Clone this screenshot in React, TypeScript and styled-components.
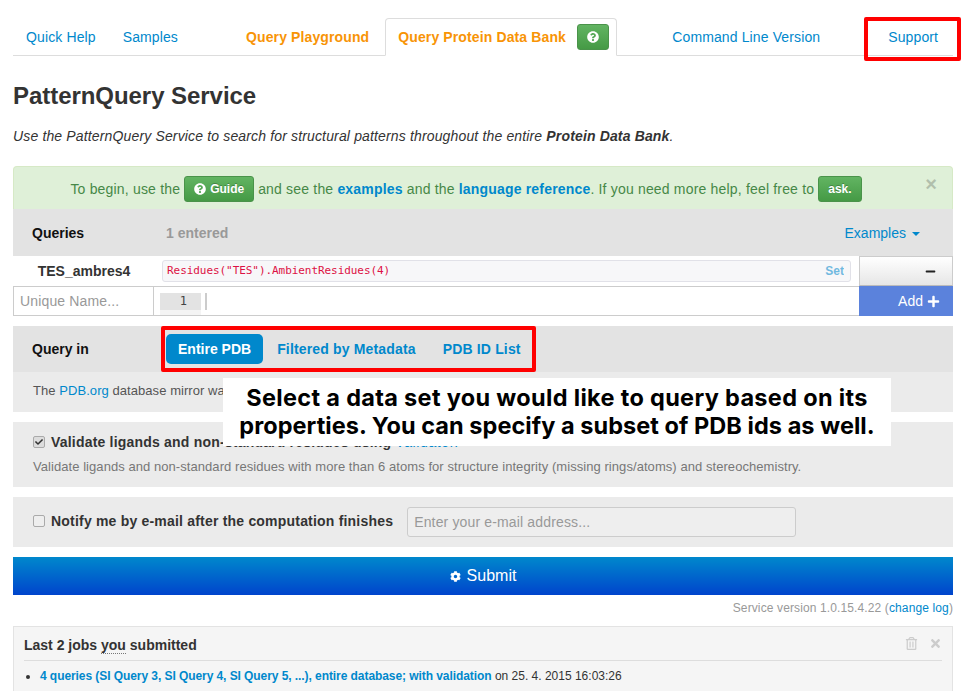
import React from "react";
import styled, { createGlobalStyle } from "styled-components";
import { FaQuestionCircle, FaCog, FaPlus, FaMinus, FaTimes, FaRegTrashAlt, FaCheck } from "react-icons/fa";

const Global = createGlobalStyle`
  html, body { margin: 0; padding: 0; background: #fff; }
  body { font-family: "Liberation Sans", Arial, sans-serif; font-size: 14px; line-height: 20px; color: #333; }
`;

const Page = styled.div`
  position: relative;
  width: 968px;
  height: 691px;
  overflow: hidden;
  box-sizing: border-box;
  padding: 18px 15px 0 13px;
`;

const Tabs = styled.nav`
  display: flex;
  align-items: flex-end;
  height: 38px;
  border-bottom: 1px solid #ddd;
  box-sizing: border-box;
  letter-spacing: 0.12px;
`;

const Tab = styled.a<{ $gap?: number; $orange?: boolean }>`
  margin-left: ${(p) => p.$gap ?? 0}px;
  padding: 0 13px;
  height: 37px;
  line-height: 38px;
  color: ${(p) => (p.$orange ? "#f89406" : "#0088cc")};
  font-weight: ${(p) => (p.$orange ? "bold" : "normal")};
  white-space: nowrap;
`;

const ActiveTab = styled.div`
  margin-left: 3px;
  width: 232px;
  height: 38px;
  margin-bottom: -1px;
  box-sizing: border-box;
  border: 1px solid #ddd;
  border-bottom-color: #fff;
  border-radius: 4px 4px 0 0;
  background: #fff;
  padding: 0 7px 0 12px;
  display: flex;
  align-items: center;
  justify-content: space-between;
  color: #f89406;
  font-weight: bold;
`;

const GreenButton = styled.span`
  display: inline-flex;
  align-items: center;
  justify-content: center;
  gap: 4px;
  box-sizing: border-box;
  color: #fff;
  font-weight: bold;
  font-size: 12px;
  line-height: 14px;
  letter-spacing: 0;
  text-shadow: 0 -1px 0 rgba(0, 0, 0, 0.25);
  background-image: linear-gradient(to bottom, #62b462, #459a45);
  border: 1px solid #4a934a;
  border-radius: 3px;
  height: 26px;
  padding: 0 9px;
  vertical-align: middle;
`;

const Title = styled.h2`
  margin: 25px 0 0;
  font-size: 24px;
  line-height: 30px;
  font-weight: bold;
  letter-spacing: -0.05px;
  color: #333;
`;

const Lead = styled.p`
  margin: 15px 0 0;
  font-style: italic;
  font-size: 14px;
  line-height: 20px;
  letter-spacing: 0.15px;
  color: #333;
`;

const Alert = styled.div`
  position: relative;
  margin-top: 20px;
  height: 43px;
  box-sizing: border-box;
  background: #dff0d8;
  border: 1px solid #d6e9c6;
  border-bottom: 0;
  border-radius: 4px 4px 0 0;
  color: #468847;
  display: flex;
  align-items: center;
  justify-content: center;
  gap: 4px;
  padding: 1px 34px 0 0;
  white-space: pre;
  line-height: 20px;
  letter-spacing: 0.18px;
`;

const AlertLink = styled.a`
  color: #0088cc;
  font-weight: bold;
`;

const CloseX = styled.span`
  position: absolute;
  top: 9px;
  right: 15px;
  font-size: 20px;
  line-height: 16px;
  font-weight: bold;
  color: #000;
  opacity: 0.2;
`;

const SectionHead = styled.div<{ $h: number; $gapTop?: number }>`
  display: flex;
  align-items: center;
  height: ${(p) => p.$h}px;
  margin-top: ${(p) => p.$gapTop ?? 0}px;
  background: #e3e3e3;
  padding: 0 33px 0 19px;
`;

const HeadLabel = styled.div`
  width: 134px;
  font-weight: bold;
  color: #111;
`;

const Entered = styled.div`
  flex: 1;
  font-weight: bold;
  color: #999;
`;

const Examples = styled.a`
  color: #0088cc;
  display: flex;
  align-items: center;
  gap: 6px;
`;

const Caret = styled.span`
  width: 0;
  height: 0;
  margin-top: 2px;
  border-left: 4px solid transparent;
  border-right: 4px solid transparent;
  border-top: 4px solid #0088cc;
`;

const QueryRow = styled.div`
  display: grid;
  grid-template-columns: 141px 1fr 94px;
  height: 30px;
`;

const QueryName = styled.div`
  padding-left: 1px;
  text-align: center;
  font-weight: bold;
  line-height: 30px;
  color: #333;
`;

const CodeWrap = styled.div`
  padding: 4px 8px 4px 8px;
`;

const CodeBox = styled.div`
  height: 22px;
  box-sizing: border-box;
  background: #f7f7f9;
  border: 1px solid #e1e1e8;
  border-radius: 3px;
  padding: 0 6px 0 4px;
  display: flex;
  align-items: center;
  justify-content: space-between;
`;

const CodeText = styled.code`
  font-family: "DejaVu Sans Mono", "Liberation Mono", monospace;
  font-size: 11px;
  letter-spacing: -0.06px;
  color: #dd1144;
`;

const SetLink = styled.a`
  font-size: 12px;
  font-weight: bold;
  color: #0088cc;
  opacity: 0.55;
`;

const MinusButton = styled.button`
  border: 1px solid #ccc;
  border-bottom-color: #bbb;
  padding: 0 16px 0 0;
  background: linear-gradient(#ffffff, #e6e6e6);
  display: flex;
  align-items: center;
  justify-content: flex-end;
  color: #222;
  font-size: 11px;
`;

const InputRow = styled.div`
  display: grid;
  grid-template-columns: 141px 1fr 94px;
  height: 30px;
  box-sizing: border-box;
`;

const NameInput = styled.div`
  box-sizing: border-box;
  border: 1px solid #ccc;
  padding: 0 6px;
  line-height: 28px;
  letter-spacing: 0.15px;
  color: #999;
`;

const EditorCell = styled.div`
  box-sizing: border-box;
  border-top: 1px solid #ccc;
  border-bottom: 1px solid #ccc;
  display: flex;
  padding: 6px 0 0 6px;
  gap: 4px;
`;

const Gutter = styled.div`
  width: 41px;
  height: 22px;
  background: linear-gradient(#e3e3e3 17px, #f4f4f4 17px);
  text-align: right;
  padding-right: 14px;
  box-sizing: border-box;
  font-family: "DejaVu Sans Mono", monospace;
  font-size: 12px;
  line-height: 17px;
  color: #444;
`;

const Cursor = styled.div`
  width: 2px;
  height: 17px;
  background: #ccc;
`;

const AddButton = styled.button`
  border: 0;
  padding: 0 13px 0 0;
  background: #5b82dc;
  color: #fff;
  font-family: inherit;
  font-size: 14px;
  display: flex;
  align-items: center;
  justify-content: flex-end;
  gap: 4px;
`;

const Pills = styled.div`
  display: flex;
  align-items: center;
  gap: 1px;
`;

const Pill = styled.a<{ $active?: boolean }>`
  height: 30px;
  line-height: 30px;
  padding: 0 ${(p) => (p.$active ? 12 : 13)}px;
  font-weight: bold;
  letter-spacing: ${(p) => (p.$active ? 0 : 0.16)}px;
  border-radius: 5px;
  color: ${(p) => (p.$active ? "#fff" : "#0088cc")};
  background: ${(p) => (p.$active ? "#0088cc" : "transparent")};
  white-space: nowrap;
`;

const InfoBar = styled.div`
  height: 40px;
  box-sizing: border-box;
  background: #ebebeb;
  padding: 9px 20px;
  font-size: 13px;
  line-height: 20px;
  letter-spacing: 0.06px;
  color: #555;
  white-space: nowrap;
`;

const BlueLink = styled.a`
  color: #0088cc;
`;

const OptionCard = styled.div`
  margin-top: 10px;
  background: #ebebeb;
  height: 65px;
  box-sizing: border-box;
  padding: 10px 20px;
`;

const NotifyCard = styled(OptionCard)`
  height: 50px;
  padding: 10px 20px;
  display: flex;
  align-items: center;
`;

const CheckLine = styled.div`
  display: flex;
  align-items: center;
  gap: 6px;
  font-weight: bold;
  letter-spacing: 0.2px;
  color: #333;
  white-space: nowrap;
`;

const NotifyLine = styled(CheckLine)`
  margin-bottom: 2px;
`;

const CheckLink = styled(BlueLink)`
  font-weight: normal;
  letter-spacing: 0.6px;
`;

const CheckBox = styled.span<{ $on?: boolean }>`
  width: 12px;
  height: 12px;
  box-sizing: border-box;
  border: 1px solid #aaa;
  border-radius: 2px;
  background: ${(p) => (p.$on ? "#ddd" : "#eee")};
  display: inline-flex;
  align-items: center;
  justify-content: center;
  font-size: 8px;
  color: #333;
`;

const Help = styled.div`
  margin-top: 5px;
  font-size: 13px;
  line-height: 20px;
  letter-spacing: 0.06px;
  color: #777;
  white-space: nowrap;
`;

const EmailInput = styled.div`
  margin-left: 14px;
  width: 389px;
  height: 30px;
  box-sizing: border-box;
  border: 1px solid #ccc;
  border-radius: 3px;
  background: #eee;
  padding: 0 6px;
  line-height: 29px;
  letter-spacing: 0.15px;
  color: #999;
`;

const SubmitButton = styled.button`
  display: flex;
  width: 100%;
  align-items: center;
  justify-content: center;
  gap: 6px;
  margin-top: 10px;
  height: 38px;
  border: 0;
  background: linear-gradient(#0088cc, #0044cc);
  color: #fff;
  font-family: inherit;
  font-size: 16px;
`;

const Version = styled.div`
  margin-top: 3px;
  height: 20px;
  text-align: right;
  font-size: 12px;
  line-height: 20px;
  letter-spacing: 0.12px;
  color: #999;
`;

const Well = styled.div`
  margin-top: 8px;
  height: 120px;
  box-sizing: border-box;
  background: #f5f5f5;
  border: 1px solid #e3e3e3;
  padding: 5px 10px;
`;

const WellHead = styled.div`
  display: flex;
  align-items: center;
  justify-content: space-between;
  height: 26px;
  border-bottom: 1px solid #ddd;
  padding-bottom: 2px;
  font-weight: bold;
  color: #333;
`;

const Abbr = styled.span`
  border-bottom: 1px dotted #777;
`;

const WellIcons = styled.span`
  display: flex;
  gap: 11px;
  align-items: center;
  padding-bottom: 3px;
  color: #ccc;
  font-size: 13px;
`;

const JobList = styled.ul`
  margin: 5px 0 0;
  padding: 0 0 0 16px;
  font-size: 12px;
  line-height: 20px;
`;

const JobLink = styled.a`
  color: #0088cc;
  font-weight: bold;
  letter-spacing: -0.07px;
`;

const RedBox = styled.div<{ $l: number; $t: number; $w: number; $h: number }>`
  position: absolute;
  left: ${(p) => p.$l}px;
  top: ${(p) => p.$t}px;
  width: ${(p) => p.$w}px;
  height: ${(p) => p.$h}px;
  box-sizing: border-box;
  border: 4px solid #ff0000;
  border-radius: 2px;
`;

const Callout = styled.div`
  position: absolute;
  left: 223px;
  top: 378px;
  width: 668px;
  height: 68px;
  background: #fff;
  text-align: center;
  font-family: "Inter", "Lato", sans-serif;
  font-weight: 700;
  font-size: 23.5px;
  line-height: 28px;
  padding-top: 6px;
  box-sizing: border-box;
  white-space: nowrap;
  color: #000;
`;

const CalloutLine = styled.div<{ $track: number }>`
  letter-spacing: ${(p) => p.$track}px;
`;

export default function App() {
  return (
    <Page>
      <Global />
      <Tabs>
        <Tab>Quick Help</Tab>
        <Tab $gap={1}>Samples</Tab>
        <Tab $gap={42} $orange>Query Playground</Tab>
        <ActiveTab>
          Query Protein Data Bank
          <GreenButton><FaQuestionCircle size={12} /></GreenButton>
        </ActiveTab>
        <Tab $gap={42}>Command Line Version</Tab>
        <Tab $gap={42}>Support</Tab>
      </Tabs>
      <Title>PatternQuery Service</Title>
      <Lead>
        Use the PatternQuery Service to search for structural patterns throughout the entire <b>Protein Data Bank</b>.
      </Lead>
      <Alert>
        <span>To begin, use the</span>
        <GreenButton><FaQuestionCircle size={12} />Guide</GreenButton>
        <span>and see the <AlertLink>examples</AlertLink> and the <AlertLink>language reference</AlertLink>. If you need more help, feel free to</span>
        <GreenButton>ask.</GreenButton>
        <CloseX>×</CloseX>
      </Alert>
      <SectionHead $h={47}>
        <HeadLabel>Queries</HeadLabel>
        <Entered>1 entered</Entered>
        <Examples>Examples <Caret /></Examples>
      </SectionHead>
      <QueryRow>
        <QueryName>TES_ambres4</QueryName>
        <CodeWrap>
          <CodeBox>
            <CodeText>Residues("TES").AmbientResidues(4)</CodeText>
            <SetLink>Set</SetLink>
          </CodeBox>
        </CodeWrap>
        <MinusButton><FaMinus /></MinusButton>
      </QueryRow>
      <InputRow>
        <NameInput>Unique Name...</NameInput>
        <EditorCell>
          <Gutter>1</Gutter>
          <Cursor />
        </EditorCell>
        <AddButton>Add <FaPlus size={13} /></AddButton>
      </InputRow>
      <SectionHead $h={46} $gapTop={10}>
        <HeadLabel>Query in</HeadLabel>
        <Pills>
          <Pill $active>Entire PDB</Pill>
          <Pill>Filtered by Metadata</Pill>
          <Pill>PDB ID List</Pill>
        </Pills>
      </SectionHead>
      <InfoBar>
        The <BlueLink>PDB.org</BlueLink> database mirror was last updated recently.
      </InfoBar>
      <OptionCard>
        <CheckLine>
          <CheckBox $on><FaCheck /></CheckBox>
          <span>Validate ligands and non-standard residues using <CheckLink>Validator.</CheckLink></span>
        </CheckLine>
        <Help>Validate ligands and non-standard residues with more than 6 atoms for structure integrity (missing rings/atoms) and stereochemistry.</Help>
      </OptionCard>
      <NotifyCard>
        <NotifyLine>
          <CheckBox />
          Notify me by e-mail after the computation finishes
        </NotifyLine>
        <EmailInput>Enter your e-mail address...</EmailInput>
      </NotifyCard>
      <SubmitButton><FaCog size={11} /> Submit</SubmitButton>
      <Version>Service version 1.0.15.4.22 (<BlueLink>change log</BlueLink>)</Version>
      <Well>
        <WellHead>
          <span>Last 2 jobs <Abbr>you</Abbr> submitted</span>
          <WellIcons><FaRegTrashAlt /><FaTimes /></WellIcons>
        </WellHead>
        <JobList>
          <li><JobLink>4 queries (SI Query 3, SI Query 4, SI Query 5, ...), entire database; with validation</JobLink> on 25. 4. 2015 16:03:26</li>
        </JobList>
      </Well>
      <RedBox $l={864} $t={17} $w={97} $h={44} />
      <RedBox $l={161} $t={326} $w={375} $h={46} />
      <Callout>
        <CalloutLine $track={0.32}>Select a data set you would like to query based on its</CalloutLine>
        <CalloutLine $track={0.05}>properties. You can specify a subset of PDB ids as well.</CalloutLine>
      </Callout>
    </Page>
  );
}
